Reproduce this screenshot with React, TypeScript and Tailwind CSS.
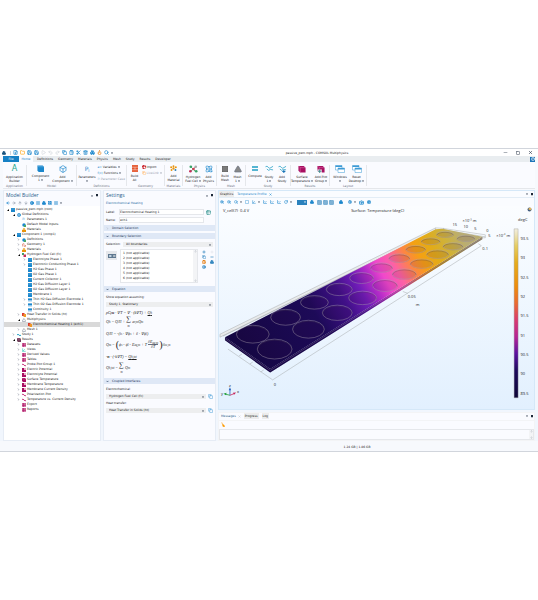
import React from "react";
import {
  Atom, Axis3d, Box, Boxes, Camera, ChartLine, ChevronDown, ChevronRight, ClipboardPaste, Copy,
  FilePlus, Folder, Globe, Grid3x3, LayoutGrid, List, Lock, Maximize, Minus, Play, Plus, Printer, Redo2,
  RotateCw, Save, Search, Settings as Cog, Square, Trash2, Triangle, Undo2, X, ZoomIn, ZoomOut, ArrowLeft, ArrowRight,
  ArrowUp, ArrowDown, CircleHelp, Target, Table2, Scissors, Flame,
} from "lucide-react";

type IconType = React.ComponentType<{ size?: number; strokeWidth?: number; className?: string; fill?: string }>;

const BLUE = "text-[#1b87cc]";

function Caret({ className = "text-gray-700" }: { className?: string }) {
  return (
    <svg viewBox="0 0 4 4" className={`size-[2px] shrink-0 ${className}`}>
      <path d="M0 1h4L2 4z" fill="currentColor" />
    </svg>
  );
}

function PanelPins() {
  return (
    <div className="flex items-center gap-[3px] text-gray-800">
      <Caret />
      <svg viewBox="0 0 4 6" className="h-[3px] w-[2px]"><path d="M0 0h4v4H0zM1.5 4h1v2h-1z" fill="currentColor" /></svg>
    </div>
  );
}

/* Title bar */

const quick: [IconType, string][] = [
  [FilePlus, BLUE], [Folder, "text-amber-500"], [Save, BLUE], [Save, BLUE], [Play, "text-gray-300"],
  [Undo2, "text-gray-300"], [Redo2, "text-gray-300"], [Copy, BLUE], [ClipboardPaste, BLUE], [Scissors, BLUE],
  [Trash2, BLUE], [Boxes, BLUE], [Flame, "text-amber-600"], [Search, BLUE],
];

function TitleBar() {
  return (
    <header className="grid h-2 grid-cols-[1fr_auto_1fr] items-center border-t border-gray-300 bg-white px-[2px]">
      <div className="flex items-center gap-[2px]">
        <Boxes size={4} strokeWidth={4} className="text-[#14507c]" />
        <span className="ml-[2px] h-[4px] w-px bg-gray-300" />
        {quick.map(([Icon, color], i) => (
          <button key={i} aria-label="Quick action" className={color}><Icon size={5} strokeWidth={3} /></button>
        ))}
        <Caret />
      </div>
      <h1 className="pl-24 text-[3px] leading-[4px]">passive_pem.mph - COMSOL Multiphysics</h1>
      <div className="flex items-center justify-end gap-2 pr-[3px] text-gray-700">
        <button aria-label="Minimize"><Minus size={5} strokeWidth={2} /></button>
        <button aria-label="Maximize"><Square size={4} strokeWidth={3} /></button>
        <button aria-label="Close"><X size={5} strokeWidth={3} /></button>
      </div>
    </header>
  );
}

const menuTabs = ["Definitions", "Geometry", "Materials", "Physics", "Mesh", "Study", "Results", "Developer"];

function MenuTabs() {
  return (
    <nav className="mx-[3px] flex h-[6px] items-center bg-[#e9edf0] text-[3px]">
      <button className="h-full w-4 bg-[#1680c4] text-white">File</button>
      <button className="h-full w-[14px] bg-[#fafbff] text-[#1680c4]">Home</button>
      <div className="ml-1 flex flex-1 gap-[5px]">
        {menuTabs.map((t) => <button key={t}>{t}</button>)}
      </div>
      <button aria-label="Help" className="flex size-[5px] items-center justify-center bg-[#1b74b8] text-white">
        <CircleHelp size={4} strokeWidth={3} />
      </button>
    </nav>
  );
}

/* Ribbon */

function Tool({ icon, a, b, menu, width }: { icon: React.ReactNode; a: string; b?: string; menu?: boolean; width: string }) {
  return (
    <button className={`flex shrink-0 flex-col items-center whitespace-nowrap ${width}`}>
      <span className="mb-[2px] flex h-[8px] items-center">{icon}</span>
      <span>{a}</span>
      <span className="flex h-[4px] items-center gap-px">{b}{menu && <Caret />}</span>
    </button>
  );
}

function Group({ label, width, children }: { label: string; width: string; children: React.ReactNode }) {
  return (
    <section className={`flex h-[21px] shrink-0 flex-col border-r border-gray-200 ${width}`}>
      <div className="flex h-[17px] justify-center">{children}</div>
      <div className="mt-[2px] text-center text-gray-500">{label}</div>
    </section>
  );
}

function Hydrogen() {
  return (
    <svg viewBox="0 0 20 18" className="h-[8px] w-[9px]">
      <path d="M4 4L14 14M4 14L15 4" stroke="#4c9b61" strokeWidth="2" />
      <circle cx="4" cy="4" r="3" fill="#3aa368" /><circle cx="15" cy="4" r="3" fill="#aaa" />
      <circle cx="10" cy="9" r="3" fill="#d23b53" /><circle cx="3" cy="14" r="3" fill="#c42e5b" /><circle cx="16" cy="14" r="3" fill="#3aa368" />
    </svg>
  );
}

function StudyIcon({ plus }: { plus?: boolean }) {
  return (
    <svg viewBox="0 0 20 18" className="h-[8px] w-[9px]" fill="none" stroke="#2ba2c6" strokeWidth="1.8">
      <path d="M1 4q4-3 6 1t6 1l5-3M4 9l4 3 4-2 6 1" />
      {plus && <path d="M13 11v7M9.500 14.500h7" stroke="#1b74b8" strokeWidth="2.400" />}
    </svg>
  );
}

function CubePlot({ plus }: { plus?: boolean }) {
  return (
    <svg viewBox="0 0 18 18" className="size-[8px]">
      <path d="M1 2h12l4 4v11H5l-4-4z" fill="#a80f62" />
      <path d="M1 2l4 4h12M5 6v11" stroke="#e583b3" fill="none" />
      {plus && <path d="M1 10h10v8H1z" fill="#fff" opacity=".8" />}
      {plus && <path d="M2 14h8M6 10v8" stroke="#3c8a8a" strokeWidth="2" />}
    </svg>
  );
}

function WindowIcon() {
  return (
    <svg viewBox="0 0 20 16" className="h-[8px] w-[10px]" fill="#fff" stroke="#3d9bd5">
      <path d="M1 1h13v9H1z" /><path d="M1 2.500h13" strokeWidth="3" />
      <path d="M6 6h13v9H6z" /><path d="M6 7.500h13" strokeWidth="3" />
    </svg>
  );
}

function Ribbon() {
  return (
    <div className="mx-[3px] flex h-[27px] overflow-hidden border-b border-gray-200 bg-[#fafbff] pt-[3px] text-[3px] leading-[4px]">
      <Group label="Application" width="w-6">
        <Tool width="w-6" icon={<span className="text-[8px] leading-[8px] text-[#1aa58b]">A</span>} a="Application" b="Builder" />
      </Group>
      <Group label="Model" width="w-[50px]">
        <Tool width="w-[22px]" icon={<svg viewBox="0 0 16 16" className="size-[7px]"><path d="M1 1h12l3 3v12H4l-3-3z" fill="#1b87cc" /><path d="M1 1l3 3h12" stroke="#8cc8ee" fill="none" /></svg>} a="Component" b="1" menu />
        <Tool width="w-[22px]" icon={<Box size={8} strokeWidth={2} className={BLUE} />} a="Add" b="Component" menu />
      </Group>
      <Group label="Definitions" width="w-[50px]">
        <Tool width="w-[19px]" icon={<span className="text-[6px] leading-[8px] text-[#1b87cc]">P<sub className="text-[4px]">i</sub></span>} a="Parameters" menu />
        <div className="flex w-[29px] flex-col gap-[2px] whitespace-nowrap pl-px">
          <button className="flex items-center gap-px"><span className={BLUE}>a=</span>Variables <Caret /></button>
          <button className="flex items-center gap-px"><span className={BLUE}>f(x)</span>Functions <Caret /></button>
          <button className="flex items-center gap-px text-gray-400"><span className="text-[#9ccbe8]">Pi</span>Parameter Case</button>
        </div>
      </Group>
      <Group label="Geometry" width="w-[38px]">
        <Tool width="w-[14px]" icon={<svg viewBox="0 0 14 16" className="h-[7px] w-[6px]"><path d="M0 0h14v16H0z" fill="#e4572e" /><path d="M0 5h14M0 11h14M7 5v6" stroke="#fff" /></svg>} a="Build" b="All" />
        <div className="flex w-[22px] flex-col gap-[2px] whitespace-nowrap">
          <button className="flex items-center gap-px"><Table2 size={4} strokeWidth={3} className="text-red-700" />Import</button>
          <button className="flex items-center gap-px text-gray-400"><Copy size={4} strokeWidth={3} className="text-orange-300" />LiveLink <Caret className="text-gray-400" /></button>
        </div>
      </Group>
      <Group label="Materials" width="w-[18px]">
        <Tool width="w-[16px]" icon={<svg viewBox="0 0 18 18" className="size-[7px]" fill="#e8930c"><circle cx="9" cy="9" r="3" /><circle cx="9" cy="3" r="2.500" /><circle cx="3" cy="6" r="2.500" /><circle cx="15" cy="6" r="2.500" /><circle cx="4" cy="13" r="2.500" /><circle cx="14" cy="13" r="2.500" fill="#2a82b8" /></svg>} a="Add" b="Material" />
      </Group>
      <Group label="Physics" width="w-[34px]">
        <Tool width="w-[18px]" icon={<Hydrogen />} a="Hydrogen" b="Fuel Cell" menu />
        <Tool width="w-[13px]" icon={<Atom size={8} strokeWidth={2} className={BLUE} />} a="Add" b="Physics" />
      </Group>
      <Group label="Mesh" width="w-[29px]">
        <Tool width="w-[13px]" icon={<svg viewBox="0 0 12 12" className="size-[6px]"><path d="M0 0h12v12H0z" fill="#666" /><path d="M0 4h12M0 8h12M4 0v12M8 0v12" stroke="#aaa" strokeWidth=".7" /></svg>} a="Build" b="Mesh" />
        <Tool width="w-[12px]" icon={<Triangle size={8} strokeWidth={2} fill="#888" className="text-gray-500" />} a="Mesh" b="1" menu />
      </Group>
      <Group label="Study" width="w-[45px]">
        <Tool width="w-[15px]" icon={<svg viewBox="0 0 12 10" className="h-[5px] w-[6px]"><path d="M0 2h12M0 8h12" stroke="#1f9fc4" strokeWidth="3" /></svg>} a="Compute" />
        <Tool width="w-[13px]" icon={<StudyIcon />} a="Study" b="1" menu />
        <Tool width="w-[13px]" icon={<StudyIcon plus />} a="Add" b="Study" />
      </Group>
      <Group label="Results" width="w-[39px]">
        <Tool width="w-[22px]" icon={<CubePlot />} a="Surface" b="Temperature" menu />
        <Tool width="w-[16px]" icon={<CubePlot plus />} a="Add Plot" b="Group" menu />
      </Group>
      <Group label="Layout" width="w-[37px]">
        <Tool width="w-[17px]" icon={<WindowIcon />} a="Windows" menu />
        <Tool width="w-[16px]" icon={<WindowIcon />} a="Reset" b="Desktop" menu />
      </Group>
    </div>
  );
}

/* Model tree */

type Kind = "root" | "globe" | "param" | "green" | "mat" | "blue" | "geom" | "fuel" | "thin" | "heat" | "multi" | "mesh" | "study" | "results" | "grid" | "axes" | "line" | "surf" | "half" | "doc";

function TreeIcon({ kind }: { kind: Kind }) {
  const box = "size-[4px] shrink-0";
  switch (kind) {
    case "globe":
      return <Globe size={4} strokeWidth={3} className={`shrink-0 ${BLUE}`} />;
    case "param":
      return <span className="shrink-0 text-[#3c9ad6]">Pi</span>;
    case "mesh":
    case "multi":
      return <Triangle size={4} strokeWidth={3} className="shrink-0 text-gray-500" />;
    case "axes":
      return <Axis3d size={4} strokeWidth={3} className="shrink-0 text-teal-500" />;
    case "study":
      return <svg viewBox="0 0 8 8" className={box}><path d="M0 4q2-3 4 0t4 0" stroke="#2ba2c6" strokeWidth="2" fill="none" /></svg>;
    case "line":
      return <svg viewBox="0 0 8 8" className={box}><path d="M0 3q2-2 4 1t4 1" stroke="#c02672" strokeWidth="1.800" fill="none" /></svg>;
    case "geom":
      return <svg viewBox="0 0 8 8" className={box}><path d="M1 7V2l3-1v6M5 7l2-3v3z" stroke="#d45b42" fill="none" /></svg>;
    case "fuel":
      return <svg viewBox="0 0 8 8" className={box}><path d="M0 0h4v4H0z" fill="#3aa368" /><path d="M3 3h5v5H3z" fill="#c42e5b" /></svg>;
    case "grid":
    case "doc":
      return <svg viewBox="0 0 8 8" className={box}><path d="M0 0h8v8H0z" fill="#d880ab" /><path d="M0 2h8M0 5h8M3 0v8" stroke="#a80f62" /></svg>;
    case "half":
      return <svg viewBox="0 0 8 8" className={box}><path d="M0 0h8v8H0z" fill="#a80f62" /><path d="M4 0h4v4H4z" fill="#ecaac8" /></svg>;
    case "surf":
    case "results":
      return <svg viewBox="0 0 8 8" className={box}><path d="M0 0h6l2 2v6H2L0 6z" fill={kind === "surf" ? "#a80f62" : "#70415c"} /><path d="M0 0l2 2h6" stroke="#e583b3" fill="none" strokeWidth=".7" /></svg>;
    case "heat":
      return <svg viewBox="0 0 8 8" className={box}><path d="M0 0h5v6H0z" fill="#dc3b30" /><path d="M3 2h5v6H3z" fill="#f09a26" /></svg>;
    case "mat":
      return <svg viewBox="0 0 8 8" className={box}><circle cx="4" cy="2.500" r="2.500" fill="#f2b750" /><path d="M0 4h8v4H0z" fill="#e8930c" /></svg>;
    case "thin":
      return <svg viewBox="0 0 8 8" className={box}><path d="M0 1h8v6H0z" fill="#8fc5ea" /><path d="M0 1h8v3H0z" fill="#1b87cc" /></svg>;
    case "green":
      return <svg viewBox="0 0 8 8" className={box}><circle cx="4" cy="4" r="3.500" fill="#1b87cc" /><path d="M4 4h4v4H4z" fill="#48a868" /></svg>;
    default:
      return <svg viewBox="0 0 8 8" className={box}><path d="M0 0h8v8H0z" fill="#1b87cc" /><path d="M0 2h8" stroke="#79bce8" /></svg>;
  }
}

// depth, state (o = open, c = closed, - = leaf), icon, label
const tree: [number, "o" | "c" | "-", Kind, string][] = [
  [0, "o", "root", "passive_pem.mph (root)"],
  [1, "o", "globe", "Global Definitions"],
  [2, "-", "param", "Parameters 1"],
  [2, "-", "green", "Default Model Inputs"],
  [2, "-", "mat", "Materials"],
  [1, "o", "blue", "Component 1 (comp1)"],
  [2, "c", "green", "Definitions"],
  [2, "c", "geom", "Geometry 1"],
  [2, "c", "mat", "Materials"],
  [2, "o", "fuel", "Hydrogen Fuel Cell (fc)"],
  [3, "c", "blue", "Electrolyte Phase 1"],
  [3, "c", "blue", "Electronic Conducting Phase 1"],
  [3, "-", "blue", "H2 Gas Phase 1"],
  [3, "-", "blue", "O2 Gas Phase 1"],
  [3, "-", "blue", "Current Collector 1"],
  [3, "-", "blue", "H2 Gas Diffusion Layer 1"],
  [3, "-", "blue", "O2 Gas Diffusion Layer 1"],
  [3, "-", "blue", "Membrane 1"],
  [3, "c", "thin", "Thin H2 Gas Diffusion Electrode 1"],
  [3, "c", "thin", "Thin O2 Gas Diffusion Electrode 1"],
  [3, "-", "thin", "Continuity 1"],
  [2, "c", "heat", "Heat Transfer in Solids (ht)"],
  [2, "o", "multi", "Multiphysics"],
  [3, "-", "heat", "Electrochemical Heating 1 (ech1)"],
  [2, "c", "mesh", "Mesh 1"],
  [1, "c", "study", "Study 1"],
  [1, "o", "results", "Results"],
  [2, "c", "grid", "Datasets"],
  [2, "c", "axes", "Views"],
  [2, "c", "grid", "Derived Values"],
  [2, "c", "grid", "Tables"],
  [2, "c", "line", "Probe Plot Group 1"],
  [2, "c", "half", "Electric Potential"],
  [2, "c", "half", "Electrolyte Potential"],
  [2, "c", "surf", "Surface Temperature"],
  [2, "c", "half", "Membrane Temperature"],
  [2, "c", "half", "Membrane Current Density"],
  [2, "c", "line", "Polarization Plot"],
  [2, "c", "line", "Temperature vs. Current Density"],
  [2, "-", "doc", "Export"],
  [2, "-", "doc", "Reports"],
];

const indent = ["pl-[2px]", "pl-[8px]", "pl-[13px]", "pl-[19px]"];

function ModelBuilder() {
  return (
    <section className="flex w-[98px] shrink-0 flex-col border border-[#e6ecf5] bg-white">
      <div className="bg-[#fafbff] px-[2px]">
        <div className="flex items-center justify-between">
          <h2 className="font-['Open_Sans',sans-serif] text-[5px] leading-[9px] text-[#2b5c8c]">Model Builder</h2>
          <PanelPins />
        </div>
        <div className={`flex h-[6px] items-center gap-[2px] ${BLUE}`}>
          {[ArrowLeft, ArrowRight, ArrowUp, ArrowDown, Target, List, Boxes, LayoutGrid, List].map((Icon, i) => (
            <button key={i} aria-label="Tree tool" className={i > 0 && i < 4 ? "text-gray-400" : ""}><Icon size={4} strokeWidth={4} /></button>
          ))}
          <Caret />
        </div>
      </div>
      <ul className="pt-px text-[3px] leading-[5px]">
        {tree.map(([depth, state, kind, label], i) => (
          <li key={i} className={`flex h-[5px] items-center gap-px whitespace-nowrap ${indent[depth]} ${kind === "heat" && depth === 3 ? "bg-[#d9d9d9]" : ""}`}>
            <span className="flex w-[3px] shrink-0 justify-center">
              {state === "o" && <svg viewBox="0 0 4 4" className="size-[2px]"><path d="M4 0v4H0z" /></svg>}
              {state === "c" && <ChevronRight size={3} strokeWidth={4} className="text-gray-500" />}
            </span>
            <span className="flex w-[5px] shrink-0 justify-center"><TreeIcon kind={kind} /></span>
            <span>{label}</span>
          </li>
        ))}
      </ul>
    </section>
  );
}

/* Settings */

function Section({ title, closed }: { title: string; closed?: boolean }) {
  return (
    <h3 className="flex h-[6px] items-center bg-[#dfe8f6] pl-[2px] text-[3px] text-[#1d3557]">
      <button className="flex items-center gap-[3px]">
        {closed ? <ChevronRight size={3} strokeWidth={3} className="text-gray-400" /> : <ChevronDown size={3} strokeWidth={5} />}
        {title}
      </button>
    </h3>
  );
}

function Picker({ id, options }: { id: string; options: string[] }) {
  return (
    <div className="flex min-w-0 flex-1 items-center bg-[#edeeef] pr-[2px]">
      <select id={id} className="h-[5px] min-w-0 flex-1 appearance-none bg-transparent pl-[3px] text-[3px] leading-[5px]">
        {options.map((o) => <option key={o}>{o}</option>)}
      </select>
      <Caret />
    </div>
  );
}

function Sum() {
  return (
    <span className="mx-px inline-flex flex-col items-center not-italic">
      <span className="text-[7px] leading-[9px]">∑</span>
      <span className="text-[3px] leading-[4px] italic">m</span>
    </span>
  );
}

function Sub({ children }: { children: React.ReactNode }) {
  return <sub className="text-[3px]">{children}</sub>;
}

function Equations() {
  return (
    <div className="flex flex-col items-start pl-[2px] font-['Liberation_Serif',serif] text-[4px] leading-[5px] italic whitespace-pre">
      <div className="flex h-[6px] items-center">ρC<Sub>p</Sub><b>u</b> · ∇T = ∇ · (k∇T) + <u>Q<Sub>h</Sub></u></div>
      <div className="flex h-[13px] items-center">Q<Sub>h</Sub> = Q<Sub>JH</Sub> +<Sum />a<Sub>v,m</Sub>Q<Sub>m</Sub></div>
      <div className="flex h-[10px] items-center">Q<Sub>JH</Sub> = -(i<Sub>s</Sub> · ∇ϕ<Sub>s</Sub> + i<Sub>l</Sub> · ∇ϕ<Sub>l</Sub>)</div>
      <div className="flex h-[13px] items-center">
        Q<Sub>m</Sub> = <span className="text-[10px] leading-[10px] not-italic">(</span>
        ϕ<Sub>s</Sub> - ϕ<Sub>l</Sub> - E<Sub>eq,m</Sub> + T
        <span className="mx-px flex flex-col items-center leading-[4px]">
          <span className="border-b border-gray-500">∂E<Sub>eq,m</Sub></span>
          <span>∂T</span>
        </span>
        <span className="text-[10px] leading-[10px] not-italic">)</span>i<Sub>loc,m</Sub>
      </div>
      <div className="flex h-[10px] items-center">-<b>n</b> · (-k∇T) = <u>Q<Sub>h,tot</Sub></u></div>
      <div className="flex h-[13px] items-center">Q<Sub>h,tot</Sub> =<Sum />Q<Sub>m</Sub></div>
    </div>
  );
}

function SettingsPanel() {
  return (
    <section className="w-[113px] shrink-0 border border-[#e6ecf5] bg-[#fafbff] text-[3px] leading-[5px]">
      <div className="flex items-center justify-between px-[2px]">
        <h2 className="font-['Open_Sans',sans-serif] text-[5px] leading-[9px] text-[#2b5c8c]">Settings</h2>
        <PanelPins />
      </div>
      <p className="mt-px mb-[3px] pl-[2px] text-[#2b6ca3]">Electrochemical Heating</p>
      <div className="grid grid-cols-[11px_1fr_5px] items-center gap-x-[2px] gap-y-[2px] pr-1 pl-[2px]">
        <label htmlFor="label">Label:</label>
        <input id="label" defaultValue="Electrochemical Heating 1" className="h-[6px] min-w-0 border border-gray-200 bg-white" />
        <button aria-label="Rename"><Table2 size={5} strokeWidth={2} className="text-teal-700" /></button>
        <label htmlFor="name">Name:</label>
        <input id="name" defaultValue="ech1" className="h-[6px] min-w-0 border border-gray-200 bg-white" />
      </div>
      <div className="mt-[2px] flex flex-col gap-[2px]">
        <Section title="Domain Selection" closed />
        <Section title="Boundary Selection" />
      </div>
      <div className="mt-[3px] flex items-center gap-[2px] pr-[2px] pl-[2px]">
        <label htmlFor="selection" className="w-[15px]">Selection:</label>
        <Picker id="selection" options={["All boundaries"]} />
      </div>
      <div className="mt-[2px] flex gap-[3px] pl-[2px]">
        <button aria-label="Active" className="mt-[2px] flex h-[9px] w-[11px] items-center justify-center bg-gray-200">
          <svg viewBox="0 0 14 7" className="h-[4px] w-[8px]"><path d="M0 0h14v7H0z" fill="#5f7890" /><path d="M2 2h4v3H2z" fill="#d3e4f1" /><path d="M9 2h4v3H9z" fill="#bcc6ce" /></svg>
        </button>
        <div className="flex h-[34px] w-[78px] border border-gray-200 bg-white">
          <ul className="flex-1 overflow-hidden pt-px pl-[2px]">
            {[1, 2, 3, 4, 5, 6].map((n) => <li key={n}>{n} (not applicable)</li>)}
          </ul>
          <div className="flex w-1 flex-col items-center justify-between bg-gray-100 text-gray-400">
            <ArrowUp size={3} /><ArrowDown size={3} />
          </div>
        </div>
        <div className="grid grid-cols-2 content-start gap-x-1 gap-y-px pt-px pl-px text-[#3286c0]">
          <Plus size={4} strokeWidth={4} /><Plus size={4} className="text-gray-300" />
          <Copy size={4} strokeWidth={3} /><Minus size={4} strokeWidth={4} />
          <ClipboardPaste size={4} strokeWidth={4} className="text-amber-600" /><Boxes size={4} strokeWidth={4} />
          <Target size={4} strokeWidth={3} />
        </div>
      </div>
      <div className="mt-[3px]"><Section title="Equation" /></div>
      <label htmlFor="study" className="mt-[3px] block pl-[2px]">Show equation assuming:</label>
      <div className="mb-[2px] flex px-[2px] pt-[2px]"><Picker id="study" options={["Study 1, Stationary"]} /></div>
      <Equations />
      <div className="mt-[4px]"><Section title="Coupled Interfaces" /></div>
      <label htmlFor="echem" className="mt-[3px] block pl-[2px]">Electrochemical:</label>
      <div className="flex items-center gap-[2px] px-[2px] pt-[2px]">
        <Picker id="echem" options={["Hydrogen Fuel Cell (fc)"]} />
        <button aria-label="Go to source" className={BLUE}><Copy size={5} strokeWidth={2} /></button>
      </div>
      <label htmlFor="heat" className="mt-[2px] block pl-[2px]">Heat transfer:</label>
      <div className="flex items-center gap-[2px] px-[2px] pt-[2px]">
        <Picker id="heat" options={["Heat Transfer in Solids (ht)"]} />
        <button aria-label="Go to source" className={BLUE}><Copy size={5} strokeWidth={2} /></button>
      </div>
    </section>
  );
}

/* Graphics */

// cx, cy, rx, ry of every opening in the plate
const holes = [
  [252, 336, 16.5, 9], [285, 319, 15, 8], [314, 304, 14, 6.8], [339, 291, 13, 6.2], [361.5, 279.5, 12, 5.5],
  [381.5, 269, 11, 4.7], [399.5, 259.500, 10.500, 4.3], [416, 250.500, 10, 3.8], [431, 242.500, 9.5, 3.4], [445.500, 235.500, 8.500, 3],
  [274, 351, 17.5, 10], [308, 331, 16, 9], [337, 314.5, 15, 7.7], [362.5, 299.500, 14, 6.8], [385, 287, 12.5, 6],
  [404.5, 275.5, 12, 5.2], [422, 265, 11.500, 4.7], [438, 255.5, 11, 4.3], [453.5, 247.500, 10, 3.6], [466.500, 239.5, 9, 3.1],
];

const ticks: [string, number][] = [
  ["93.5", 239.5], ["93", 259], ["92.5", 278.5], ["92", 298], ["91.5", 317.5], ["91", 337], ["90.5", 356.5], ["90", 376], ["89.5", 395.5],
];

function Plot() {
  return (
    <svg viewBox="218 207 317 204" className="block w-full bg-linear-to-b from-[#fbfdff] to-[#e2f0fe] font-['Open_Sans',sans-serif]" fontSize="4" fill="#222">
      <defs>
        <linearGradient id="plate" gradientUnits="userSpaceOnUse" x1="247" y1="355" x2="460" y2="233">
          <stop offset="0" stopColor="#150744" />
          <stop offset=".32" stopColor="#1d0a58" />
          <stop offset=".45" stopColor="#401087" />
          <stop offset=".53" stopColor="#701cb8" />
          <stop offset=".59" stopColor="#b52cc8" />
          <stop offset=".64" stopColor="#f048cc" />
          <stop offset=".7" stopColor="#fd62a4" />
          <stop offset=".76" stopColor="#fd8545" />
          <stop offset=".81" stopColor="#f6a012" />
          <stop offset=".87" stopColor="#e2ac18" />
          <stop offset=".94" stopColor="#cdb23e" />
          <stop offset="1" stopColor="#b9ad74" />
        </linearGradient>
        <linearGradient id="bar" x1="0" y1="1" x2="0" y2="0">
          <stop offset="0" stopColor="#0d0638" />
          <stop offset=".16" stopColor="#1d0a5c" />
          <stop offset=".26" stopColor="#5a12a0" />
          <stop offset=".36" stopColor="#b52495" />
          <stop offset=".46" stopColor="#d93a70" />
          <stop offset=".56" stopColor="#ea6a30" />
          <stop offset=".66" stopColor="#ee8d0c" />
          <stop offset=".8" stopColor="#e6ac1c" />
          <stop offset=".9" stopColor="#e6cd62" />
          <stop offset=".96" stopColor="#ece2b4" />
          <stop offset="1" stopColor="#f3efdf" />
        </linearGradient>
      </defs>

      {/* bounding frame */}
      <g fill="none" stroke="#a5a9ad" strokeWidth=".5">
        <path d="M219 336L436 229v3L219 339z" fill="#e9ebec" />
        <path d="M222 338L438 231M436 229L443 229.500 486 236v3l-4 0M444 229v2l42 7" />
        <path d="M227 351l45 31L482 247l-3-2M238 358l3-2M249 366l3-2M260 374l3-2M403 293l5 2" />
      </g>

      {/* plate */}
      <path d="M224 339l45.500 32L483 238v2.500L269.500 374.500 224 342z" fill="url(#plate)" />
      <path d="M224 339l45.500 32L483 238v2.500L269.500 374.500 224 342z" fill="#16063b" opacity=".3" />
      <path d="M224 339L436 230.500l7-.5 40 8L269.500 371z" fill="url(#plate)" />
      <path d="M224 340.500l45.500 32L483 239" fill="none" stroke="#cbb8dd" strokeWidth=".4" opacity=".6" />
      {holes.map(([cx, cy, rx, ry], i) => (
        <g key={i}>
          <ellipse cx={cx} cy={cy + 0.6} rx={rx} ry={ry} fill="#3a0c3c" opacity=".1" />
          <ellipse cx={cx} cy={cy} rx={rx} ry={ry} fill="none" stroke="#aaa2b0" strokeWidth=".5" opacity=".85" />
          <path d={`M${cx - rx} ${cy + 1}a${rx} ${ry} 0 0 1 ${rx * 2} 0`} fill="none" stroke="#4b3f55" strokeWidth=".4" opacity=".7" />
        </g>
      ))}

      {/* labels */}
      <text x="222" y="213.500">V_cell(7)=0.4 V</text>
      <text x="351" y="213.500">Surface: Temperature (degC)</text>
      <text x="463" y="223">×10⁻³ m</text>
      <text x="453" y="227.500">15</text>
      <text x="464" y="229">10</text>
      <text x="475" y="231">5</text>
      <text x="487" y="233">0</text>
      <text x="489" y="238.500">5</text>
      <text x="497" y="238.500">×10⁻⁴ m</text>
      <text x="483" y="251.500">0.1</text>
      <text x="408" y="300">0.05</text>
      <text x="416" y="308">m</text>
      <text x="273" y="388">0</text>

      {/* colour legend */}
      <text x="519" y="222">degC</text>
      <path d="M515 230h4v170h-4z" fill="url(#bar)" stroke="#999" strokeWidth=".4" />
      {ticks.map(([t, y]) => <text key={t} x="521.500" y={y + 1.500}>{t}</text>)}
      <circle cx="530.500" cy="210.500" r="2" fill="#405d80" />
      <path d="M529 210l2-1.500 1.500 1-1 2z" fill="#e7b95c" />

      {/* orientation triad */}
      <g strokeWidth=".8" fill="none">
        <path d="M229 397.500v-6" stroke="#2563c0" />
        <path d="M229 397.500l-5-1.300" stroke="#22a03a" />
        <path d="M229 397.500l5-2" stroke="#c8245a" />
      </g>
      <path d="M227.800 392.500l1.200-3 1.200 3z" fill="#2563c0" />
      <path d="M225.500 395l-3 1 2.700 1.500z" fill="#22a03a" />
      <path d="M232 395l3.200-.2-2 2.200z" fill="#c8245a" />
      <text x="228" y="389">z</text>
      <text x="220" y="397">y</text>
      <text x="236" y="395">x</text>
    </svg>
  );
}

const plotTools: [IconType, boolean?][] = [
  [ZoomIn], [ZoomOut], [Search, true], [Maximize], [Axis3d, true], [ChartLine], [ChartLine], [ChartLine], [RotateCw, true],
];

function Graphics() {
  return (
    <main className="flex min-w-0 flex-1 flex-col gap-[2px]">
      <section className="border border-[#d5e8f8] bg-[#fafcff]">
        <div className="flex h-[7px] items-center gap-[2px] border-b border-[#e3edf6] pr-px text-[3px]">
          <button className="h-full bg-[#ececec] px-px">Graphics</button>
          <button className="flex h-full items-center gap-[2px] px-px text-[#1b87cc]">Temperature Profile <X size={3} strokeWidth={4} /></button>
          <div className="flex-1" />
          <PanelPins />
        </div>
        <div className={`flex h-2 items-center gap-[3px] pl-px ${BLUE}`}>
          {plotTools.map(([Icon, menu], i) => (
            <button key={i} aria-label="View tool" className="flex items-center gap-[2px]"><Icon size={4} strokeWidth={3} />{menu && <Caret />}</button>
          ))}
          <button aria-label="Mode" className="ml-[2px] flex h-[5px] w-[10px] items-center justify-end bg-[#2b82bd] pr-px"><Caret className="text-white" /></button>
          <button aria-label="Scene"><Boxes size={4} strokeWidth={4} /></button>
          <div className="flex gap-px text-[#4a8cbc]">
            {[0, 1, 2].map((n) => (
              <button key={n} aria-label="Render option" className="bg-[#b9dbf2]"><Grid3x3 size={5} strokeWidth={2} /></button>
            ))}
          </div>
          <button aria-label="Lock" className="ml-[2px]"><Lock size={4} strokeWidth={4} fill="#1b87cc" /></button>
          <button aria-label="Options" className="ml-[2px] flex items-center gap-[2px]"><Cog size={4} strokeWidth={4} /><Caret /></button>
          <button aria-label="Snapshot"><Camera size={5} strokeWidth={4} /></button>
          <button aria-label="Print"><Printer size={4} strokeWidth={4} /></button>
        </div>
        <Plot />
      </section>
      <section className="flex flex-1 flex-col border border-gray-100 bg-[#fafbff] text-[3px]">
        <div className="flex h-[8px] items-center gap-[3px] border-b border-gray-100 pr-px">
          <button className="flex items-center gap-[2px] pl-[2px] text-[#2b5c8c]">Messages <X size={3} className="text-gray-400" /></button>
          <button className="bg-[#ececec] px-px leading-[6px]">Progress</button>
          <button className="bg-[#ececec] px-px leading-[6px]">Log</button>
          <div className="flex-1" />
          <PanelPins />
        </div>
        <div className="flex h-2 items-center pl-[2px] text-amber-500">
          <svg viewBox="0 0 8 12" className="h-[5px] w-[4px]"><path d="M1 1l2 5M3 6l3 1 2 4H4z" stroke="currentColor" fill="currentColor" strokeWidth="1.500" /></svg>
        </div>
        <div className="flex h-[11px] justify-end border border-gray-200 bg-[#fafbff]">
          <div className="flex w-1 flex-col items-center justify-between bg-gray-100 text-gray-400">
            <ArrowUp size={3} /><ArrowDown size={3} />
          </div>
        </div>
      </section>
    </main>
  );
}

export default function App() {
  return (
    <div className="flex min-h-screen flex-col justify-center bg-white font-['DejaVu_Sans',sans-serif] text-[#222]">
      <div className="bg-[#f7f9fd]">
        <TitleBar />
        <MenuTabs />
        <Ribbon />
        <div className="mt-px flex gap-[2px] bg-[#f1f6fd] px-[3px]">
          <ModelBuilder />
          <SettingsPanel />
          <Graphics />
        </div>
        <footer className="mt-[2px] flex h-[9px] items-center justify-center border-b border-gray-300 pl-[176px] text-[3px]">
          1.24 GB | 1.86 GB
        </footer>
      </div>
    </div>
  );
}
